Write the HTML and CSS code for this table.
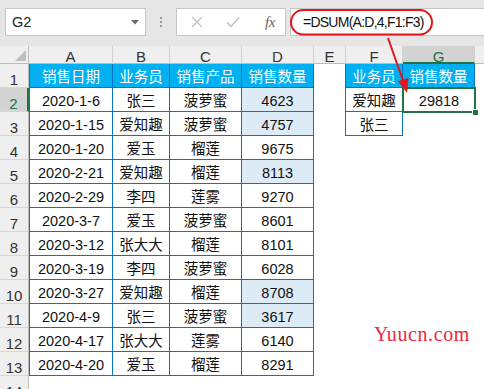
FILE: index.html
```html
<!DOCTYPE html>
<html>
<head>
<meta charset="utf-8">
<link rel="stylesheet" href="styles.css">
</head>
<body>
<div class="app">
  <div class="fbar">
    <div class="namebox">
      <span class="nbtext">G2</span>
      <svg class="nbarrow" width="8" height="5" viewBox="0 0 8 5"><polygon points="0,0 8,0 4,4.5" fill="#6a6a6a"/></svg>
    </div>
    <div class="dots"><i></i><i></i><i></i></div>
    <div class="btnbox">
      <svg class="ico" width="12" height="12" viewBox="0 0 12 12"><path d="M1 1 L11 11 M11 1 L1 11" stroke="#c4c4c4" stroke-width="1.4" fill="none"/></svg>
      <svg class="ico" width="14" height="12" viewBox="0 0 14 12"><path d="M1 6.5 L5 10.5 L13 1.5" stroke="#c4c4c4" stroke-width="1.6" fill="none"/></svg>
      <span class="fx">fx</span>
    </div>
    <div class="formula">=DSUM(A:D,4,F1:F3)</div>
  </div>

  <div class="sheet">
    <div class="ch corner"><span class="tri"></span></div>
    <div class="ch">A</div><div class="ch">B</div><div class="ch">C</div><div class="ch">D</div><div class="ch">E</div><div class="ch">F</div><div class="ch selch">G</div><div class="ch"></div>

    <div class="rh">1</div>
    <div class="c t tl th">销售日期</div><div class="c t th">业务员</div><div class="c t th">销售产品</div><div class="c t th">销售数量</div>
    <div class="c er"></div><div class="c t th">业务员</div><div class="c t th">销售数量</div><div class="c"></div>

    <div class="rh selrh">2</div>
    <div class="c t tl">2020-1-6</div><div class="c t">张三</div><div class="c t">菠萝蜜</div><div class="c t lb">4623</div>
    <div class="c er"></div><div class="c t">爱知趣</div><div class="c selcell">29818<div class="selbox"><span class="handle"></span></div></div><div class="c"></div>

    <div class="rh">3</div>
    <div class="c t tl">2020-1-15</div><div class="c t">爱知趣</div><div class="c t">菠萝蜜</div><div class="c t lb">4757</div>
    <div class="c er"></div><div class="c t">张三</div><div class="c"></div><div class="c"></div>

    <div class="rh">4</div>
    <div class="c t tl">2020-1-20</div><div class="c t">爱玉</div><div class="c t">榴莲</div><div class="c t">9675</div>
    <div class="c"></div><div class="c"></div><div class="c"></div><div class="c"></div>

    <div class="rh">5</div>
    <div class="c t tl">2020-2-21</div><div class="c t">爱知趣</div><div class="c t">榴莲</div><div class="c t lb">8113</div>
    <div class="c"></div><div class="c"></div><div class="c"></div><div class="c"></div>

    <div class="rh">6</div>
    <div class="c t tl">2020-2-29</div><div class="c t">李四</div><div class="c t">莲雾</div><div class="c t">9270</div>
    <div class="c"></div><div class="c"></div><div class="c"></div><div class="c"></div>

    <div class="rh">7</div>
    <div class="c t tl">2020-3-7</div><div class="c t">爱玉</div><div class="c t">菠萝蜜</div><div class="c t">8601</div>
    <div class="c"></div><div class="c"></div><div class="c"></div><div class="c"></div>

    <div class="rh">8</div>
    <div class="c t tl">2020-3-12</div><div class="c t">张大大</div><div class="c t">榴莲</div><div class="c t">8101</div>
    <div class="c"></div><div class="c"></div><div class="c"></div><div class="c"></div>

    <div class="rh">9</div>
    <div class="c t tl">2020-3-19</div><div class="c t">李四</div><div class="c t">菠萝蜜</div><div class="c t">6028</div>
    <div class="c"></div><div class="c"></div><div class="c"></div><div class="c"></div>

    <div class="rh">10</div>
    <div class="c t tl">2020-3-27</div><div class="c t">爱知趣</div><div class="c t">榴莲</div><div class="c t lb">8708</div>
    <div class="c"></div><div class="c"></div><div class="c"></div><div class="c"></div>

    <div class="rh">11</div>
    <div class="c t tl">2020-4-9</div><div class="c t">张三</div><div class="c t">菠萝蜜</div><div class="c t lb">3617</div>
    <div class="c"></div><div class="c"></div><div class="c"></div><div class="c"></div>

    <div class="rh">12</div>
    <div class="c t tl">2020-4-17</div><div class="c t">张大大</div><div class="c t">莲雾</div><div class="c t">6140</div>
    <div class="c"></div><div class="c"></div><div class="c"></div><div class="c"></div>

    <div class="rh">13</div>
    <div class="c t tl">2020-4-20</div><div class="c t">爱玉</div><div class="c t">榴莲</div><div class="c t">8291</div>
    <div class="c"></div><div class="c"></div><div class="c"></div><div class="c"></div>

    <div class="rh">14</div>
    <div class="c"></div><div class="c"></div><div class="c"></div><div class="c"></div>
    <div class="c"></div><div class="c"></div><div class="c"></div><div class="c"></div>
  </div>

  <svg class="overlay" width="484" height="389" viewBox="0 0 484 389">
    <rect x="291" y="10" width="141" height="24.5" rx="12.25" fill="none" stroke="#e8141c" stroke-width="2"/>
    <line x1="388" y1="38" x2="403.5" y2="82" stroke="#e8141c" stroke-width="2"/>
    <polygon points="407,93 398,81 408.5,78" fill="#e8141c"/>
  </svg>
  <div class="watermark">Yuucn.com</div>
</div>
</body>
</html>
```

FILE: styles.css
```css
html, body {
  margin: 0;
  padding: 0;
  width: 484px;
  height: 389px;
  overflow: hidden;
  background: #ffffff;
}

.app {
  position: relative;
  width: 484px;
  height: 389px;
  overflow: hidden;
  font-family: "Liberation Sans", "Noto Sans CJK SC", sans-serif;
}

/* formula bar */
.fbar {
  height: 46px;
  box-sizing: border-box;
  background: #e6e6e6;
  display: flex;
  align-items: flex-start;
  padding-top: 8px;
  padding-left: 5px;
}

.namebox {
  width: 141px;
  height: 28px;
  box-sizing: border-box;
  background: #fff;
  border: 1px solid #c6c6c6;
  display: flex;
  align-items: center;
  justify-content: space-between;
  padding: 0 6px 0 6px;
}

.nbtext {
  font-size: 14.5px;
  color: #222;
  line-height: 16px;
}

.nbarrow {
  display: block;
  margin-top: 1px;
}

.dots {
  width: 30px;
  height: 28px;
  display: flex;
  flex-direction: column;
  align-items: center;
  justify-content: center;
  gap: 2px;
}

.dots i {
  display: block;
  width: 2px;
  height: 2px;
  background: #9a9a9a;
}

.btnbox {
  width: 110px;
  height: 28px;
  box-sizing: border-box;
  background: #fff;
  border: 1px solid #c6c6c6;
  display: flex;
  align-items: center;
  padding-left: 14px;
  gap: 0;
}

.btnbox .ico {
  display: block;
}

.btnbox .ico:first-child {
  margin-right: 23px;
}

.fx {
  font-family: "Liberation Serif", serif;
  font-style: italic;
  font-size: 15px;
  color: #666;
  margin-left: 25px;
  letter-spacing: -0.5px;
}

.formula {
  margin-left: 4px;
  flex: 1;
  height: 28px;
  box-sizing: border-box;
  background: #fff;
  border: 1px solid #c6c6c6;
  border-right: none;
  font-size: 14px;
  letter-spacing: -0.75px;
  color: #111;
  line-height: 26px;
  padding-left: 12px;
}

/* sheet */
.sheet {
  display: grid;
  grid-template-columns: 29px 84px 57px 72px 72px 32px 57px 72px 72px;
  grid-template-rows: 18px repeat(14, 24px);
  font-size: 14.5px;
}

.ch {
  box-sizing: border-box;
  background: #efefef;
  border-right: 1px solid #d2d2d2;
  border-bottom: 1px solid #bdbdbd;
  display: flex;
  justify-content: center;
  align-items: flex-start;
  padding-top: 4px;
  line-height: 14px;
  font-size: 15px;
  color: #333;
}

.corner {
  position: relative;
  border-right: 1px solid #bdbdbd;
}

.tri {
  position: absolute;
  right: 2px;
  bottom: 2px;
  width: 0;
  height: 0;
  border-style: solid;
  border-width: 0 0 11px 11px;
  border-color: transparent transparent #bdbdbd transparent;
}

.selch {
  background: #d3d3d3;
  border-bottom: 2px solid #217346;
  color: #217346;
}

.rh {
  box-sizing: border-box;
  background: #efefef;
  border-right: 1px solid #bdbdbd;
  border-bottom: 1px solid #d6d6d6;
  display: flex;
  justify-content: center;
  align-items: center;
  padding-top: 8px;
  font-size: 15px;
  line-height: 16px;
  color: #333;
}

.selrh {
  background: #d3d3d3;
  border-right: 2px solid #217346;
  color: #217346;
}

.c {
  box-sizing: border-box;
  background: #fff;
  display: flex;
  justify-content: center;
  align-items: center;
  padding-top: 3px;
  line-height: 17px;
  color: #111;
  white-space: nowrap;
}

.t {
  border-right: 1px solid #0a74c4;
  border-bottom: 1px solid #0a74c4;
}

.tl {
  border-left: 1px solid #0a74c4;
}

.er {
  border-right: 1px solid #0a74c4;
}

.th {
  background: #00b0f0;
  color: #fff;
}

.lb {
  background: #ddebf7;
}

.selcell {
  position: relative;
  overflow: visible;
}

.selbox {
  position: absolute;
  left: -1px;
  top: -1px;
  width: 74px;
  height: 26px;
  box-sizing: border-box;
  border: 2px solid #217346;
}

.handle {
  position: absolute;
  right: -5px;
  bottom: -5px;
  width: 7px;
  height: 7px;
  box-sizing: border-box;
  background: #217346;
  border: 1px solid #fff;
}

.overlay {
  position: absolute;
  left: 0;
  top: 0;
  pointer-events: none;
}

.watermark {
  position: absolute;
  left: 374px;
  top: 324px;
  font-family: "Liberation Serif", serif;
  font-size: 20px;
  line-height: 20px;
  letter-spacing: 0.6px;
  color: #f0263a;
}
```
